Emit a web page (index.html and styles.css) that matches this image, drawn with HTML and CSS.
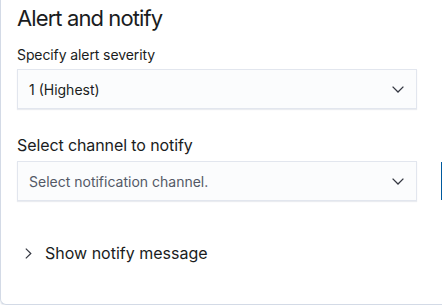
FILE: index.html
```html
<!DOCTYPE html>
<html lang="en">
<head>
<meta charset="UTF-8" />
<meta name="viewport" content="width=device-width, initial-scale=1.0">
<title>Alert and notify</title>
<link rel="stylesheet" href="styles.css">
</head>
<body>

  <!-- alert settings panel, top edge scrolled out of view -->
  <section class="panel">
    <h2 class="panel-title">Alert and notify</h2>

    <!-- severity -->
    <label class="field-label small" for="severity">Specify alert severity</label>
    <div class="select-box" id="severity">
      <span class="select-value">1 (Highest)</span>
      <svg class="chevron-down" width="12" height="7" viewBox="0 0 12 7"><path d="M0.6 0.6 L6 6 L11.4 0.6" fill="none" stroke="#343741" stroke-width="1.3"/></svg>
    </div>

    <!-- channel -->
    <label class="field-label large" for="channel">Select channel to notify</label>
    <div class="select-box" id="channel">
      <span class="select-value placeholder">Select notification channel.</span>
      <svg class="chevron-down" width="12" height="7" viewBox="0 0 12 7"><path d="M0.6 0.6 L6 6 L11.4 0.6" fill="none" stroke="#343741" stroke-width="1.3"/></svg>
    </div>

    <!-- collapsed accordion -->
    <div class="accordion">
      <svg class="chevron-right" width="7" height="11" viewBox="0 0 7 11"><path d="M0.8 0.6 L5.8 5.5 L0.8 10.4" fill="none" stroke="#343741" stroke-width="1.2"/></svg>
      <span>Show notify message</span>
    </div>

    <!-- edge of the next button, peeking in -->
    <span class="edge-mark"></span>
  </section>

</body>
</html>
```

FILE: styles.css
```css
/* page */
body
{
  margin: 0;
  background: #ffffff;
  font-family: Inter, "Noto Sans", sans-serif;
  color: #1a1c21;
}
/* panel box */
.panel
{
  position: relative;
  box-sizing: border-box;
  height: 305px;
  padding: 4px 25px 0 16px;
  border-left: 1px solid #d3dae6;
  border-bottom: 1px solid #d3dae6;
  border-bottom-left-radius: 6px;
  box-shadow: 0 1px 2px rgba(152, 162, 179, 0.25);
  display: flex;
  flex-direction: column;
}
/* panel heading */
.panel-title
{
  margin: 0 0 13px 0;
  font-size: 22px;
  line-height: 28px;
  font-weight: 400;
  letter-spacing: -0.9px;
}
/* field labels */
.field-label
{
  display: block;
  margin-bottom: 4px;
  letter-spacing: -0.1px;
}
.small
{
  font-size: 14px;
  line-height: 20px;
}
.large
{
  font-size: 16px;
  line-height: 24px;
  margin-top: 24px;
}
/* select box */
.select-box
{
  box-sizing: border-box;
  height: 40px;
  padding: 0 12px 0 11px;
  background: #fbfcfd;
  border: 1px solid #e2e6ee;
  box-shadow: 0 1px 1px rgba(152, 162, 179, 0.2);
  display: flex;
  align-items: center;
  justify-content: space-between;
  font-size: 14px;
}
.placeholder
{
  color: #535966;
}
/* accordion toggle */
.accordion
{
  margin-top: 40px;
  padding-left: 8px;
  display: flex;
  align-items: center;
  gap: 13px;
  font-size: 16px;
  line-height: 24px;
}
/* blue bar at right edge */
.edge-mark
{
  position: absolute;
  left: 440px;
  top: 162px;
  width: 2px;
  height: 38px;
  background: #005a9e;
}
```
